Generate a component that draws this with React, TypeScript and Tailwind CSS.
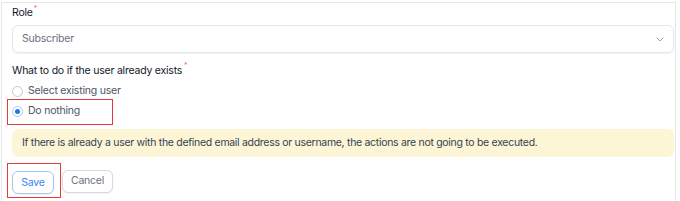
import React, { useState } from 'react';

const font = { fontFamily: 'Inter, "Noto Sans", sans-serif', letterSpacing: '-0.22px' };

const Radio: React.FC<{ label: string; checked: boolean; onChange: () => void }> = ({ label, checked, onChange }) => (
  <label className="flex items-center h-[18px] gap-[5px] cursor-pointer" onClick={onChange}>
    <span
      className={`w-[11px] h-[11px] shrink-0 rounded-full border flex items-center justify-center bg-white ${
        checked ? 'border-[#a9c9f2]' : 'border-[#c4c8ce]'
      }`}
    >
      {checked && <span className="w-[5px] h-[5px] rounded-full bg-[#1f7ae8]" />}
    </span>
    <span className="text-[10.5px] text-[#4b5563]">{label}</span>
  </label>
);

// red annotation frame drawn over an element
const Marker: React.FC<{ className: string }> = ({ className }) => (
  <span className={`absolute border-[1.5px] border-[#e53935] pointer-events-none ${className}`} />
);

export default function App() {
  const [mode, setMode] = useState<'select' | 'nothing'>('nothing');

  return (
    <div className="w-[680px] h-[201px] bg-white overflow-hidden" style={font}>
      <div className="ml-[1px] mr-[4px] mt-[2px] h-[220px] border-l border-t border-r border-[#e5e7eb] pl-[10px] pr-[1px]">
        <div className="h-[22px] pb-[3px] flex items-center text-[10.5px] text-[#111827]">
          Role<span className="text-[#f87171] text-[7px] self-start mt-[1px] ml-[1px]">*</span>
        </div>

        <div className="h-[28px] border border-[#e5e7eb] rounded-[6px] shadow-[0_1px_2px_rgba(0,0,0,0.06)] flex items-center justify-between pl-[9px] pr-[9px]">
          <span className="text-[10.5px] text-[#6b7280]">Subscriber</span>
          <svg width="8" height="5" viewBox="0 0 8 5" fill="none">
            <path d="M0.5 0.5l3.5 3.5 3.5-3.5" stroke="#a0a6af" strokeWidth="1" />
          </svg>
        </div>

        <div className="mt-[10px] h-[15px] flex items-center text-[10.5px] text-[#111827]">
          What to do if the user already exists
          <span className="text-[#f87171] text-[7px] self-start -mt-[2px] ml-[2px]">*</span>
        </div>

        <div className="mt-[4px]">
          <Radio label="Select existing user" checked={mode === 'select'} onChange={() => setMode('select')} />
        </div>
        <div className="relative mt-[2px]">
          <Radio label="Do nothing" checked={mode === 'nothing'} onChange={() => setMode('nothing')} />
          <Marker className="-left-[5px] -top-[3px] w-[106px] h-[26px]" />
        </div>

        <div className="mt-[9px] h-[28px] rounded-[6px] bg-[#fdf6d6] flex items-center pl-[10px] text-[10.5px] text-[#374151] tracking-[-0.3px]">
          If there is already a user with the defined email address or username, the actions are not going to be executed.
        </div>

        <div className="flex items-center gap-[8px] mt-[11px]">
          <div className="relative">
            <button className="w-[42px] h-[23px] rounded-[6px] border border-[#a5c8f5] bg-white text-[10.5px] text-[#3b82f6] shadow-[0_1px_2px_rgba(0,0,0,0.06)]">
              Save
            </button>
            <Marker className="-left-[5px] -top-[5px] w-[54px] h-[35px]" />
          </div>
          <button className="w-[51px] h-[23px] rounded-[6px] border border-[#d6d9de] bg-white text-[10.5px] text-[#6b7280] shadow-[0_1px_2px_rgba(0,0,0,0.06)]">
            Cancel
          </button>
        </div>
      </div>
    </div>
  );
}
